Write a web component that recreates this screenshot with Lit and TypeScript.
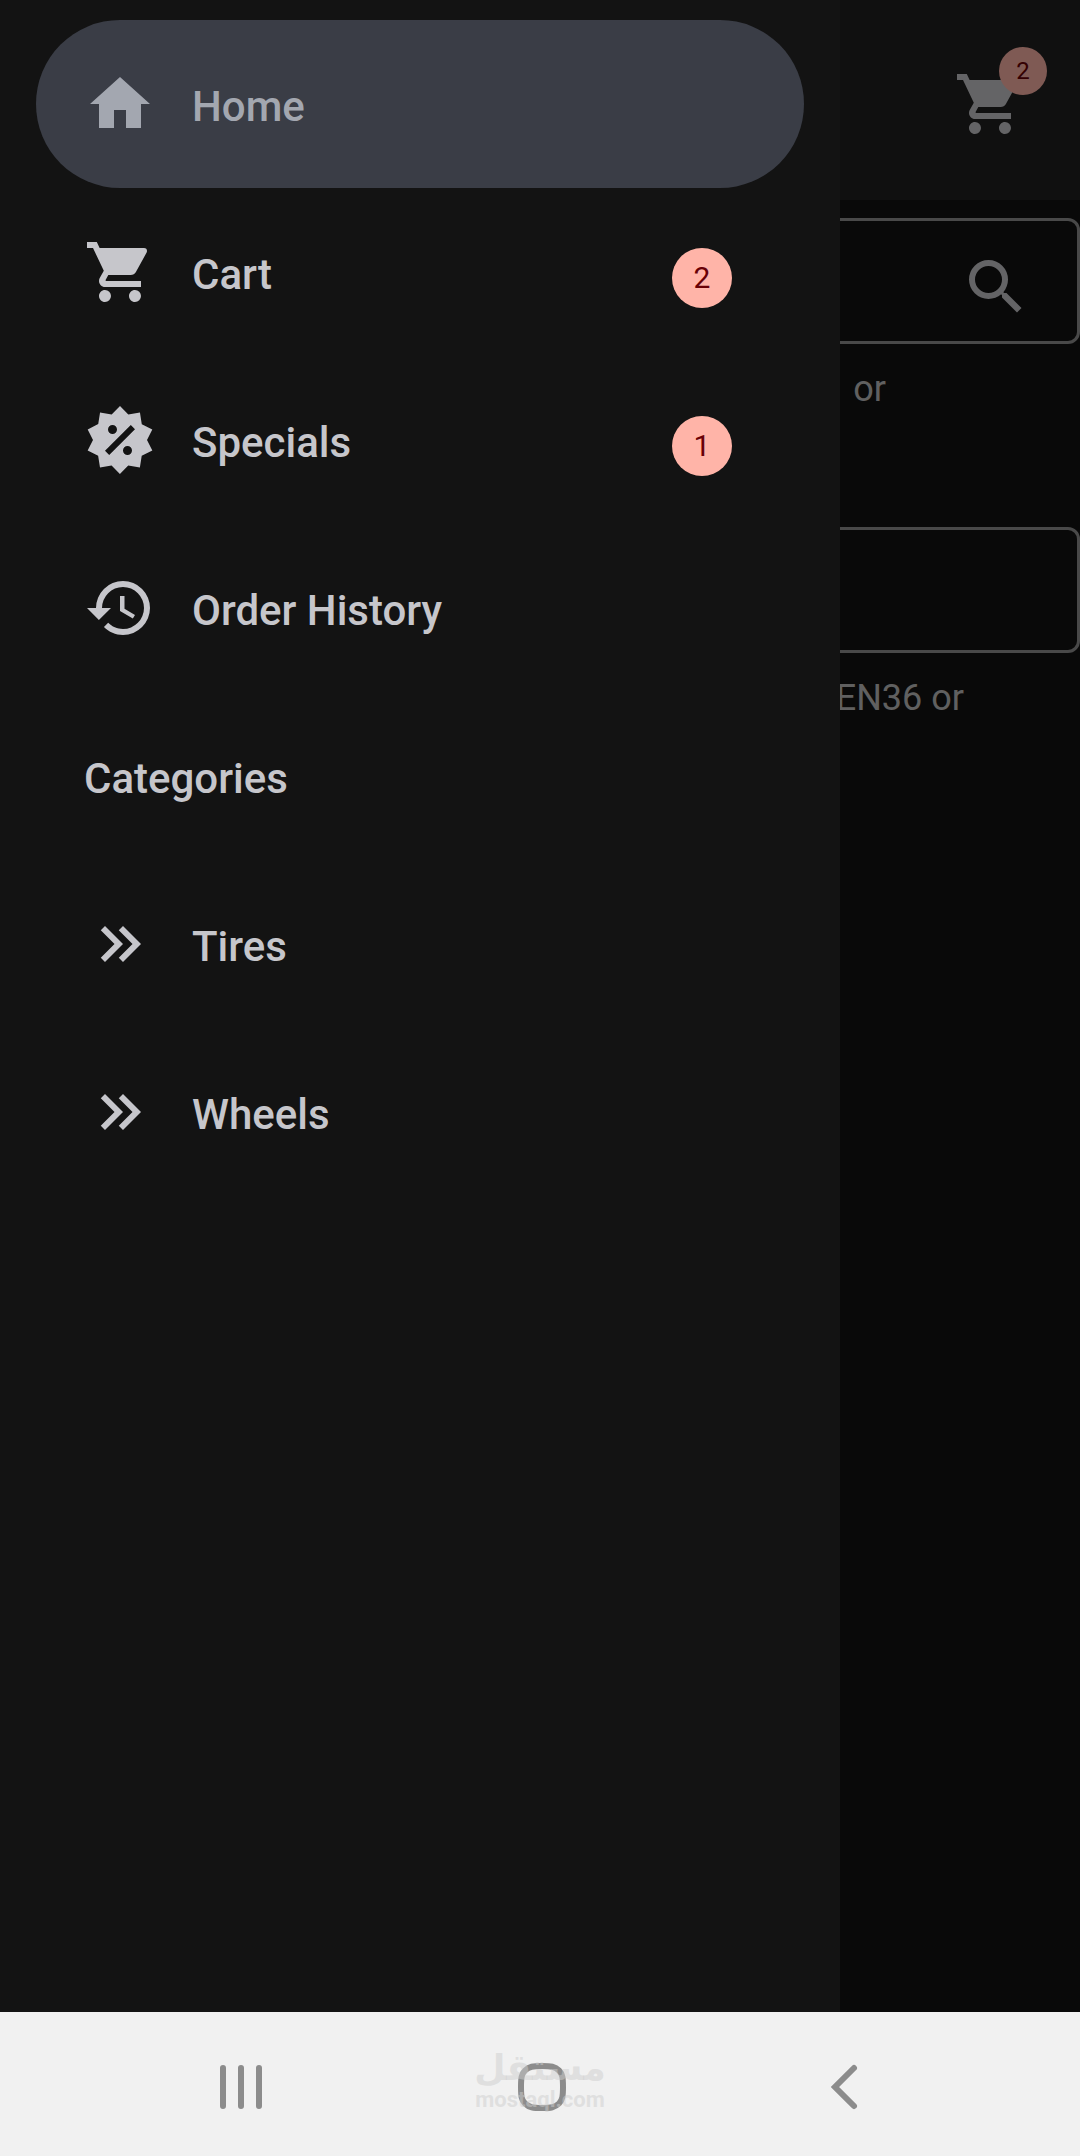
import { LitElement, html, css, nothing } from "lit";
import { customElement, property } from "lit/decorators.js";
import { classMap } from "lit/directives/class-map.js";

const ICONS = {
  home: "M10,20V14H14V20H19V12H22L12,3L2,12H5V20H10Z",
  cart: "M17,18A2,2 0 0,1 19,20A2,2 0 0,1 17,22C15.89,22 15,21.1 15,20C15,18.89 15.89,18 17,18M1,2H4.27L5.21,4H20A1,1 0 0,1 21,5C21,5.17 20.95,5.34 20.88,5.5L17.3,11.97C16.96,12.58 16.3,13 15.55,13H8.1L7.2,14.63L7.17,14.75A0.25,0.25 0 0,0 7.42,15H19V17H7C5.89,17 5,16.1 5,15C5,14.65 5.09,14.32 5.24,14.04L6.6,11.59L3,4H1V2M7,18A2,2 0 0,1 9,20A2,2 0 0,1 7,22C5.89,22 5,21.1 5,20C5,18.89 5.89,18 7,18Z",
  sale: "M18.65,2.85L19.26,6.71L22.77,8.5L21,12L22.78,15.5L19.24,17.29L18.63,21.15L14.74,20.54L11.97,23.3L9.19,20.5L5.33,21.14L4.71,17.25L1.22,15.47L3,11.97L1.23,8.5L4.74,6.69L5.35,2.86L9.22,3.5L12,0.69L14.77,3.46L18.65,2.85M9.5,7A1.5,1.5 0 0,0 8,8.5A1.5,1.5 0 0,0 9.5,10A1.5,1.5 0 0,0 11,8.5A1.5,1.5 0 0,0 9.5,7M14.5,14A1.5,1.5 0 0,0 13,15.5A1.5,1.5 0 0,0 14.5,17A1.5,1.5 0 0,0 16,15.5A1.5,1.5 0 0,0 14.5,14M8.41,17L17,8.41L15.59,7L7,15.59L8.41,17Z",
  history:
    "M13.5,8H12V13L16.28,15.54L17,14.33L13.5,12.25V8M13,3A9,9 0 0,0 4,12H1L4.96,16.03L9,12H6A7,7 0 0,1 13,5A7,7 0 0,1 20,12A7,7 0 0,1 13,19C11.07,19 9.32,18.21 8.06,16.94L6.64,18.36C8.27,20 10.5,21 13,21A9,9 0 0,0 22,12A9,9 0 0,0 13,3",
  chevrons:
    "M5.59,7.41L7,6L13,12L7,18L5.59,16.59L10.17,12L5.59,7.41M11.59,7.41L13,6L19,12L13,18L11.59,16.59L16.17,12L11.59,7.41Z",
  search:
    "M9.5,3A6.5,6.5 0 0,1 16,9.5C16,11.11 15.41,12.59 14.44,13.73L14.71,14H15.5L20.5,19L19,20.5L14,15.5V14.71L13.73,14.44C12.59,15.41 11.11,16 9.5,16A6.5,6.5 0 0,1 3,9.5A6.5,6.5 0 0,1 9.5,3M9.5,5A4.5,4.5 0 0,0 5,9.5A4.5,4.5 0 0,0 9.5,14A4.5,4.5 0 0,0 14,9.5A4.5,4.5 0 0,0 9.5,5Z",
};

type IconName = keyof typeof ICONS;

interface DrawerEntry {
  label: string;
  icon: IconName;
  href: string;
  active?: boolean;
  badge?: number;
}

const PAGES: DrawerEntry[] = [
  { label: "Home", icon: "home", href: "#home", active: true },
  { label: "Cart", icon: "cart", href: "#cart", badge: 2 },
  { label: "Specials", icon: "sale", href: "#specials", badge: 1 },
  { label: "Order History", icon: "history", href: "#orders" },
];

const CATEGORIES: DrawerEntry[] = [
  { label: "Tires", icon: "chevrons", href: "#tires" },
  { label: "Wheels", icon: "chevrons", href: "#wheels" },
];

@customElement("app-icon")
export class AppIcon extends LitElement {
  @property() name: IconName = "home";

  static styles = css`
    :host {
      display: block;
      flex: none;
      width: 72px;
      height: 72px;
    }
    .glyph {
      display: block;
      width: 100%;
      height: 100%;
      fill: currentColor;
    }
  `;

  render() {
    return html`<svg class="glyph" viewBox="0 0 24 24" aria-hidden="true">
      <path d=${ICONS[this.name]}></path>
    </svg>`;
  }
}

@customElement("nav-drawer")
export class NavDrawer extends LitElement {
  static styles = css`
    :host {
      display: block;
      box-sizing: border-box;
      padding: 20px 36px;
      background: #131313;
      color: #c6c6cb;
      font: 500 42px/60px Roboto, sans-serif;
    }
    .list {
      margin: 0;
      padding: 0;
      list-style: none;
    }
    .item {
      display: flex;
      align-items: center;
      gap: 36px;
      box-sizing: border-box;
      min-height: 168px;
      padding: 0 72px 0 48px;
      border-radius: 84px;
      color: inherit;
      text-decoration: none;
    }
    .item.active {
      background: #3a3d46;
      color: #a3a7b0;
    }
    .label {
      flex: 1;
      padding-top: 6px;
    }
    .heading {
      margin: 0;
      font: inherit;
    }
    .badge {
      width: 60px;
      margin-top: 12px;
      border-radius: 50%;
      background: #ffb4a8;
      color: #690005;
      font-size: 30px;
      font-weight: 400;
      text-align: center;
    }
  `;

  private entry(e: DrawerEntry) {
    return html`<li>
      <a
        class=${classMap({ item: true, active: !!e.active })}
        href=${e.href}
        aria-current=${e.active ? "page" : nothing}
      >
        <app-icon name=${e.icon}></app-icon>
        <span class="label">${e.label}</span>
        ${e.badge ? html`<span class="badge">${e.badge}</span>` : nothing}
      </a>
    </li>`;
  }

  render() {
    return html`<nav>
      <ul class="list">
        ${PAGES.map((e) => this.entry(e))}
      </ul>
      <h2 class="heading item"><span class="label">Categories</span></h2>
      <ul class="list">
        ${CATEGORIES.map((e) => this.entry(e))}
      </ul>
    </nav>`;
  }
}

@customElement("search-page")
export class SearchPage extends LitElement {
  static styles = css`
    :host {
      display: block;
      background: #121212;
      color: #c8c8cc;
      font: 400 36px/48px Roboto, sans-serif;
    }
    .bar {
      display: flex;
      justify-content: flex-end;
      align-items: center;
      box-sizing: border-box;
      height: 200px;
      padding: 8px 54px 0;
      background: #202020;
    }
    .icon-button {
      position: relative;
      padding: 0;
      border: 0;
      background: none;
      color: inherit;
    }
    .count {
      position: absolute;
      top: -21px;
      right: -21px;
      width: 48px;
      border-radius: 50%;
      background: #ffb4a8;
      color: #690005;
      font: 400 24px/48px Roboto, sans-serif;
    }
    .form {
      display: grid;
      gap: 66px;
      padding-top: 18px;
    }
    .field {
      display: flex;
      align-items: center;
      box-sizing: border-box;
      height: 126px;
      padding: 0 45px;
      border: 3px solid #929292;
      border-radius: 12px;
    }
    .field .icon-button {
      padding-top: 12px;
    }
    .box {
      flex: 1;
      min-width: 0;
      height: 100%;
      padding: 0;
      border: 0;
      outline: 0;
      background: none;
      color: inherit;
      font: inherit;
    }
    .hint {
      min-height: 96px;
      margin: 21px 0 0;
      padding-right: 194px;
      color: #c0c0c0;
      text-align: right;
    }
    .hint.wide {
      padding-right: 116px;
    }
  `;

  render() {
    return html`
      <header class="bar">
        <button class="icon-button" type="button" aria-label="Cart">
          <app-icon name="cart"></app-icon>
          <span class="count">2</span>
        </button>
      </header>
      <form class="form">
        <div>
          <div class="field">
            <input class="box" type="text" aria-label="Search" />
            <button class="icon-button" type="button" aria-label="Search">
              <app-icon name="search"></app-icon>
            </button>
          </div>
          <p class="hint">or</p>
        </div>
        <div>
          <div class="field">
            <input class="box" type="text" aria-label="Part number" />
          </div>
          <p class="hint wide">EN36 or</p>
        </div>
      </form>
    `;
  }
}

@customElement("system-bar")
export class SystemBar extends LitElement {
  static styles = css`
    :host {
      position: relative;
      display: grid;
      grid-template-columns: repeat(3, 1fr);
      box-sizing: border-box;
      height: 144px;
      padding: 6px 85px 0 90px;
      background: #f1f1f1;
    }
    .key {
      display: grid;
      place-items: center;
      padding: 0;
      border: 0;
      background: none;
    }
    .shape {
      display: block;
      width: 48px;
      height: 48px;
      fill: none;
      stroke: #8c8c8c;
      stroke-width: 6;
      stroke-linecap: round;
    }
    .watermark {
      position: absolute;
      top: 36px;
      left: 50%;
      display: grid;
      justify-items: center;
      transform: translateX(-50%);
      color: rgba(205, 205, 205, 0.5);
      font: 700 22px/24px Roboto, sans-serif;
      pointer-events: none;
    }
    .arabic {
      font: 700 36px/40px "DejaVu Sans", sans-serif;
    }
  `;

  render() {
    return html`
      <button class="key" type="button" aria-label="Recent apps">
        <svg class="shape" viewBox="0 0 48 48"><path d="M6 5V43M24 5V43M42 5V43"></path></svg>
      </button>
      <button class="key" type="button" aria-label="Home screen">
        <svg class="shape" viewBox="0 0 48 48">
          <path
            d="M24 3C33 3 37 3.600 41 7.500C44.500 11 45 15 45 24C45 33 44.500 37 41 40.500C37 44.400 33 45 24 45C15 45 11 44.400 7 40.500C3.500 37 3 33 3 24C3 15 3.500 11 7 7.500C11 3.600 15 3 24 3Z"
          ></path>
        </svg>
      </button>
      <button class="key" type="button" aria-label="Back">
        <svg class="shape" viewBox="0 0 48 48"><path d="M34 5L15 24L34 43"></path></svg>
      </button>
      <div class="watermark">
        <span class="arabic" lang="ar" dir="rtl">مستقل</span>
        <span>mostaql.com</span>
      </div>
    `;
  }
}

@customElement("app-root")
export class AppRoot extends LitElement {
  static styles = css`
    :host {
      display: grid;
      grid-template-rows: 1fr auto;
      min-height: 100vh;
    }
    .screen {
      position: relative;
      display: grid;
      overflow: hidden;
    }
    .scrim {
      position: absolute;
      inset: 0;
      background: rgba(0, 0, 0, 0.5);
    }
    .drawer {
      position: absolute;
      inset: 0 auto 0 0;
      width: 840px;
      max-width: 80%;
    }
  `;

  render() {
    return html`
      <div class="screen">
        <search-page></search-page>
        <div class="scrim"></div>
        <nav-drawer class="drawer"></nav-drawer>
      </div>
      <system-bar></system-bar>
    `;
  }
}
